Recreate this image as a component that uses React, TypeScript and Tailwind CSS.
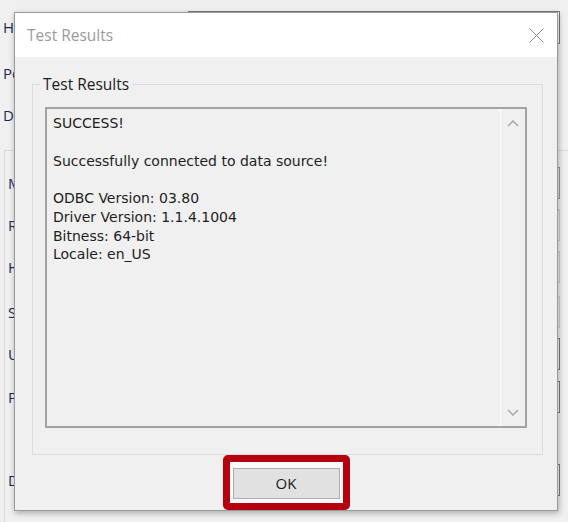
import React from "react";

type BgRow = {
	label: string;
	mt: string;
	input: string;
};

// parent DSN setup window, mostly hidden behind the dialog
const topRows: BgRow[] = [
	{ label: "Host:", mt: "mt-0", input: "w-[372px] border-[#7a7a7a] bg-white" },
	{ label: "Port:", mt: "mt-[13px]", input: "w-[90px] border-[#7a7a7a] bg-white" },
	{ label: "Database:", mt: "mt-[9px]", input: "w-[240px] border-[#7a7a7a] bg-white" },
];

const groupRows: BgRow[] = [
	{ label: "Mechanism:", mt: "mt-[16px]", input: "w-[372px] border-[#9a9a9a] bg-[#e5e5e5]" },
	{ label: "Realm:", mt: "mt-[10px]", input: "w-[372px] border-[#d0d0d0] bg-[#f0f0f0]" },
	{ label: "Host FQDN:", mt: "mt-[10px]", input: "w-[372px] border-[#d0d0d0] bg-[#f0f0f0]" },
	{ label: "Service Name:", mt: "mt-[13px]", input: "w-[372px] border-[#d0d0d0] bg-[#f0f0f0]" },
	{ label: "User Name:", mt: "mt-[10px]", input: "w-[372px] border-[#7a7a7a] bg-white" },
	{ label: "Password:", mt: "mt-[11px]", input: "w-[372px] border-[#7a7a7a] bg-white" },
	{ label: "Delegation UID:", mt: "mt-[51px]", input: "w-[372px] border-[#7a7a7a] bg-white" },
];

const resultLines = [
	"SUCCESS!",
	"",
	"Successfully connected to data source!",
	"",
	"ODBC Version: 03.80",
	"Driver Version: 1.1.4.1004",
	"Bitness: 64-bit",
	"Locale: en_US",
];

const Chevron = ({ down }: { down?: boolean }) => (
	<svg width="12" height="7" viewBox="0 0 12 7">
		<path
			d={down ? "M1 1 L6 6 L11 1" : "M1 6 L6 1 L11 6"}
			fill="none"
			stroke="#a8a8a8"
			strokeWidth="1.5"
		/>
	</svg>
);

const App = () => {
	return (
		<div className="relative w-[568px] h-[522px] overflow-hidden bg-[#f0f0f0] font-['Open_Sans',sans-serif]">
			<div className="pt-[11px]">
				{topRows.map((row) => (
					<div key={row.label} className={`flex items-center h-[33px] ${row.mt}`}>
						<span className="w-[188px] pl-[3px] text-[15px] text-[#1f2a55]">
							{row.label}
						</span>
						<div className={`h-full border ${row.input}`} />
					</div>
				))}
				<div className="mt-[18px] ml-[4px] border-l border-t border-[#dadada] pl-[3px] h-[400px]">
					{groupRows.map((row) => (
						<div key={row.label} className={`flex items-center h-[32px] ${row.mt}`}>
							<span className="w-[180px] text-[15px] text-[#1f2a55]">
								{row.label}
							</span>
							<div className={`h-full border ${row.input}`} />
						</div>
					))}
				</div>
			</div>

			<div className="absolute left-[14px] top-[12px] w-[544px] border border-[#9a9a9a] bg-[#f0f0f0] shadow-[1px_2px_6px_rgba(0,0,0,0.3)] flex flex-col">
				<div className="h-[44px] bg-white flex items-center justify-between pl-[12px] pr-[13px]">
					<span className="text-[15.5px] text-[#9b9b9b] pt-[1px]">Test Results</span>
					<svg width="15" height="15" viewBox="0 0 15 15">
						<path d="M0.5 0.5 L14.5 14.5 M14.5 0.5 L0.5 14.5" stroke="#8a8a8a" strokeWidth="1" />
					</svg>
				</div>

				<fieldset className="ml-[17px] mt-[17px] w-[511px] border border-[#dcdcdc] pb-[26px]">
					<legend className="ml-[7px] px-[3px] text-[15.5px] leading-[20px] text-[#1b1b1b]">
						Test Results
					</legend>
					<div className="ml-[12px] mt-[13px] w-[482px] h-[321px] border-2 border-[#a3a3a3] flex">
						<div className="flex-1 pl-[6px] pt-[5px] font-['DejaVu_Sans',sans-serif] text-[14px] leading-[18.75px] text-[#1e1e1e]">
							{resultLines.map((line, i) => (
								<div key={i} className="h-[18.75px] whitespace-pre">
									{line}
								</div>
							))}
						</div>
						<div className="w-[25px] border-l border-[#fafafa] flex flex-col items-center justify-between pt-[11px] pb-[10px]">
							<Chevron />
							<Chevron down />
						</div>
					</div>
				</fieldset>

				<div className="flex justify-center">
					<div className="rounded-[5px] border-[7px] border-[#b5000f] bg-[#fafafa] px-[3px] pt-[6px] pb-[4px]">
						<button
							type="button"
							className="w-[107px] h-[31px] bg-[#e1e1e1] border border-[#adadad] text-[15px] text-[#1a1a1a] flex items-center justify-center"
						>
							OK
						</button>
					</div>
				</div>
			</div>
		</div>
	);
};

export default App;
